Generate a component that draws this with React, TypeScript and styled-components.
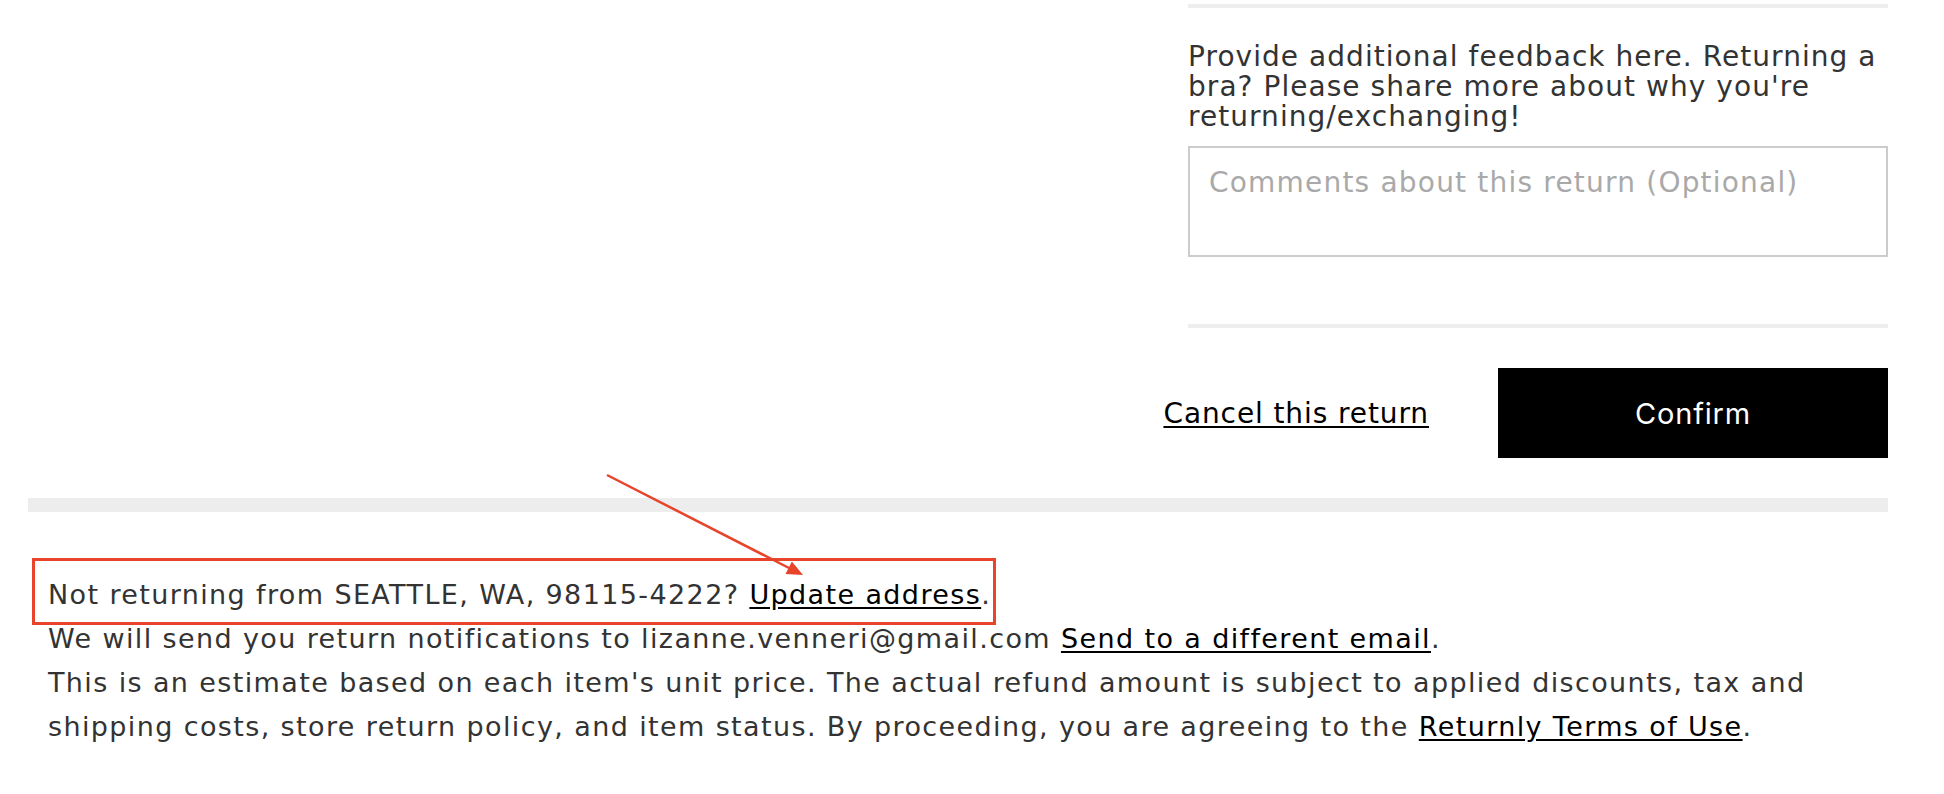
import React from 'react';
import styled, { createGlobalStyle } from 'styled-components';

const GlobalStyle = createGlobalStyle`
  html, body {
    margin: 0;
    padding: 0;
    background: #fff;
  }
  body {
    font-family: "DejaVu Sans", "Liberation Sans", sans-serif;
    color: #333;
  }
`;

const Page = styled.div`
  position: relative;
  width: 1860px;
  margin-left: 28px;
`;

const FormColumn = styled.section`
  display: flex;
  flex-direction: column;
  width: 700px;
  margin-left: auto;
`;

const Divider = styled.hr<{ $top: number }>`
  margin: ${(p) => p.$top}px 0 0;
  border: 0;
  height: 4px;
  background: #eeeeee;
`;

const FieldLabel = styled.label`
  display: block;
  margin-top: 34px;
  font-size: 28px;
  line-height: 30px;
  letter-spacing: 1.05px;
  color: #333;
`;

const Comments = styled.textarea`
  display: block;
  box-sizing: border-box;
  width: 100%;
  height: 111px;
  margin: 14px 0 0;
  padding: 18px 19px;
  border: 2px solid #cccccc;
  border-radius: 0;
  resize: none;
  outline: none;
  font-family: inherit;
  font-size: 28px;
  letter-spacing: 1.2px;
  line-height: normal;
  color: #333;

  &::placeholder {
    color: #a9a9a9;
  }
`;

const Actions = styled.div`
  display: flex;
  justify-content: flex-end;
  align-items: center;
  gap: 69px;
  margin-top: 40px;
`;

const CancelLink = styled.a`
  flex-shrink: 0;
  white-space: nowrap;
  font-size: 28px;
  letter-spacing: 0.9px;
  color: #000;
  text-decoration: underline;
  text-underline-offset: 3px;
  cursor: pointer;
`;

const ConfirmButton = styled.button`
  flex-shrink: 0;
  width: 390px;
  height: 90px;
  border: 0;
  background: #000;
  color: #fff;
  font-family: Inter, "Liberation Sans", sans-serif;
  font-size: 29px;
  letter-spacing: 0.8px;
  cursor: pointer;
`;

const SectionBar = styled.div`
  margin-top: 40px;
  height: 14px;
  background: #ededed;
`;

const Notes = styled.div`
  position: relative;
  margin-top: 61px;
  padding-left: 20px;
  font-size: 27px;
  line-height: 44px;
  letter-spacing: 1.38px;
  color: #333;
`;

const Note = styled.p`
  margin: 0;
`;

const InlineLink = styled.a`
  color: #000;
  text-decoration: underline;
  text-underline-offset: 3px;
  cursor: pointer;
`;

// annotation drawn over the page
const Highlight = styled.div`
  position: absolute;
  left: 4px;
  top: -15px;
  width: 964px;
  height: 67px;
  box-sizing: border-box;
  border: 3px solid #e8432b;
  pointer-events: none;
`;

const ArrowLayer = styled.svg`
  position: absolute;
  left: 0;
  top: 0;
  overflow: visible;
  pointer-events: none;
`;

const App: React.FC = () => {
  return (
    <>
      <GlobalStyle />
      <Page>
        <FormColumn>
          <Divider $top={4} />
          <FieldLabel htmlFor="return-comments">
            Provide additional feedback here. Returning a bra? Please share more about why you're
            returning/exchanging!
          </FieldLabel>
          <Comments id="return-comments" placeholder="Comments about this return (Optional)" />
          <Divider $top={67} />
          <Actions>
            <CancelLink>Cancel this return</CancelLink>
            <ConfirmButton>Confirm</ConfirmButton>
          </Actions>
        </FormColumn>

        <SectionBar />

        <Notes>
          <Note>
            Not returning from SEATTLE, WA, 98115-4222? <InlineLink>Update address</InlineLink>.
          </Note>
          <Note>
            We will send you return notifications to lizanne.venneri@gmail.com{' '}
            <InlineLink>Send to a different email</InlineLink>.
          </Note>
          <Note>
            This is an estimate based on each item's unit price. The actual refund amount is subject
            to applied discounts, tax and shipping costs, store return policy, and item status. By
            proceeding, you are agreeing to the <InlineLink>Returnly Terms of Use</InlineLink>.
          </Note>
          <Highlight />
        </Notes>

        <ArrowLayer width={1860} height={794} viewBox="0 0 1860 794">
          <line x1={579} y1={475} x2={761} y2={568} stroke="#e8432b" strokeWidth={2.5} />
          <polygon points="775,575 757.5,573.9 763.9,561.5" fill="#e8432b" />
        </ArrowLayer>
      </Page>
    </>
  );
};

export default App;
